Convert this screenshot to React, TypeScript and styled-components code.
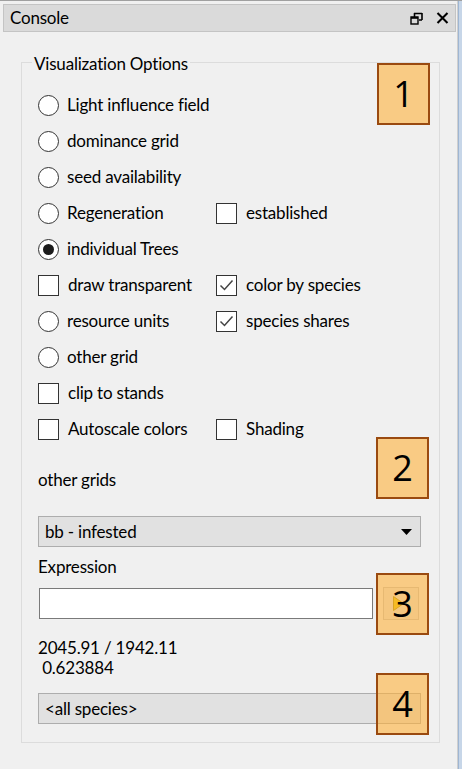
import React from "react";
import styled, { createGlobalStyle } from "styled-components";

const GlobalStyle = createGlobalStyle`
	html, body {
		margin: 0;
		padding: 0;
		background: #f0f0f0;
	}
	body {
		font-family: Lato, "Open Sans", sans-serif;
		font-size: 17px;
		letter-spacing: -0.2px;
		color: #000;
	}
`;

const Screen = styled.div`
	position: relative;
	width: 462px;
	height: 769px;
	display: flex;
	overflow: hidden;
	box-sizing: border-box;
	border-top: 1px solid #a0a0a0;
`;

const Dock = styled.div`
	width: 457px;
	display: flex;
	flex-direction: column;
`;

const EdgeLine = styled.div`
	width: 1px;
	background: #cfcfcf;
`;

const NeighborStrip = styled.div`
	flex: 1;
	background: #c7d6e8;
	border-left: 1px solid #9fb6d3;
`;

const TitleBar = styled.div`
	margin: 3px 1px 0 3px;
	height: 28px;
	box-sizing: border-box;
	background: #dadada;
	border: 1px solid #c4c4c4;
	display: flex;
	align-items: center;
	padding: 0 6px;
`;

const TitleText = styled.span`
	flex: 1;
	line-height: 22px;
`;

const TitleButtons = styled.div`
	display: flex;
	align-items: center;
	gap: 13px;
`;

const GroupBox = styled.fieldset`
	margin: 17px 0 0 21px;
	width: 419px;
	box-sizing: border-box;
	min-width: 0;
	border: 1px solid #dcdcdc;
	padding: 0 17px 18px 16px;
`;

const Legend = styled.legend`
	margin-left: -6px;
	padding: 4px 2px 0;
	line-height: 22px;
`;

const OptionGrid = styled.div`
	margin-top: 12px;
	display: grid;
	grid-template-columns: 178px 1fr;
	grid-auto-rows: 36px;
`;

const Option = styled.label<{ $col?: number }>`
	display: flex;
	align-items: center;
	gap: 8px;
	grid-column: ${(p) => p.$col ?? 1};
	line-height: 22px;
	white-space: nowrap;
`;

const Spacer = styled.div`
	grid-column: 2;
`;

const RadioMark = styled.span<{ $checked?: boolean }>`
	position: relative;
	width: 19px;
	height: 19px;
	border-radius: 50%;
	border: 1px solid #333;
	background: #fff;
	flex: none;
	&::after {
		content: "";
		display: ${(p) => (p.$checked ? "block" : "none")};
		position: absolute;
		left: 4px;
		top: 4px;
		width: 11px;
		height: 11px;
		border-radius: 50%;
		background: #1c1c1c;
	}
`;

const CheckMark = styled.span`
	width: 19px;
	height: 19px;
	border: 1px solid #333;
	background: #fff;
	flex: none;
	display: flex;
	align-items: center;
	justify-content: center;
	margin-right: 1px;
`;

const SectionLabel = styled.div<{ $top: number }>`
	margin-top: ${(p) => p.$top}px;
	line-height: 22px;
`;

const Combo = styled.div<{ $top: number }>`
	margin-top: ${(p) => p.$top}px;
	width: 383px;
	height: 31px;
	box-sizing: border-box;
	background: #e1e1e1;
	border: 1px solid #adadad;
	display: flex;
	align-items: center;
	padding: 0 8px 0 6px;
`;

const ComboText = styled.span`
	flex: 1;
	line-height: 22px;
`;

const ExpressionRow = styled.div`
	margin-top: 9px;
	display: flex;
	align-items: center;
	height: 33px;
`;

const TextInput = styled.div`
	margin-left: 1px;
	width: 334px;
	height: 31px;
	box-sizing: border-box;
	background: #fff;
	border: 1px solid #7a7a7a;
`;

const RunButton = styled.div`
	margin-left: 10px;
	width: 36px;
	height: 33px;
	box-sizing: border-box;
	background: #e6e6e6;
	border: 1px solid #c4c4c4;
	display: flex;
	align-items: center;
	padding-left: 9px;
`;

const Readout = styled.div`
	margin-top: 18px;
	line-height: 20px;
	white-space: pre;
`;

const Callout = styled.div<{ $x: number; $y: number }>`
	position: absolute;
	left: ${(p) => p.$x}px;
	top: ${(p) => p.$y}px;
	width: 53px;
	height: 62px;
	box-sizing: border-box;
	border: 2px solid #9a4a10;
	background: rgba(255, 178, 60, 0.6);
	display: flex;
	align-items: center;
	justify-content: center;
	font-family: "Open Sans", sans-serif;
	font-size: 36px;
	letter-spacing: 0;
	line-height: 1;
	color: #000;
`;

const FloatIcon = () => (
	<svg width="13" height="13" viewBox="0 0 13 13">
		<path d="M4 1.5h8M4.5 1v5M12 1v7M9 8h3" stroke="#000" strokeWidth="1.6" fill="none" />
		<rect x="1" y="5" width="7" height="7" fill="none" stroke="#000" strokeWidth="1.4" />
		<path d="M1 5.8h7" stroke="#000" strokeWidth="2" />
	</svg>
);

const CloseIcon = () => (
	<svg width="13" height="12" viewBox="0 0 13 12">
		<path d="M1.5 1L11.5 11M11.5 1L1.5 11" stroke="#000" strokeWidth="2.1" />
	</svg>
);

const Tick = () => (
	<svg width="15" height="13" viewBox="0 0 15 13">
		<path d="M1.5 6.5L5.5 10.5L13.5 1.5" stroke="#444" strokeWidth="1.5" fill="none" />
	</svg>
);

const Arrow = () => (
	<svg width="11" height="6" viewBox="0 0 11 6">
		<path d="M0 0H11L5.5 6Z" fill="#000" />
	</svg>
);

const PlayIcon = () => (
	<svg width="11" height="15" viewBox="0 0 11 15">
		<path d="M0.5 0.5L10.5 7.5L0.5 14.5Z" fill="#e8c800" stroke="#a89000" strokeWidth="1" />
	</svg>
);

const Radio: React.FC<{ label: string; checked?: boolean }> = ({ label, checked }) => (
	<Option>
		<RadioMark $checked={checked} />
		{label}
	</Option>
);

const Check: React.FC<{ label: string; checked?: boolean; col?: number }> = ({ label, checked, col }) => (
	<Option $col={col}>
		<CheckMark>{checked && <Tick />}</CheckMark>
		{label}
	</Option>
);

export default function App() {
	return (
		<>
			<GlobalStyle />
			<Screen>
				<Dock>
					<TitleBar>
						<TitleText>Console</TitleText>
						<TitleButtons>
							<FloatIcon />
							<CloseIcon />
						</TitleButtons>
					</TitleBar>
					<GroupBox>
						<Legend>Visualization Options</Legend>
						<OptionGrid>
							<Radio label="Light influence field" />
							<Spacer />
							<Radio label="dominance grid" />
							<Spacer />
							<Radio label="seed availability" />
							<Spacer />
							<Radio label="Regeneration" />
							<Check label="established" col={2} />
							<Radio label="individual Trees" checked />
							<Spacer />
							<Check label="draw transparent" />
							<Check label="color by species" checked col={2} />
							<Radio label="resource units" />
							<Check label="species shares" checked col={2} />
							<Radio label="other grid" />
							<Spacer />
							<Check label="clip to stands" />
							<Spacer />
							<Check label="Autoscale colors" />
							<Check label="Shading" col={2} />
						</OptionGrid>
						<SectionLabel $top={22}>other grids</SectionLabel>
						<Combo $top={25}>
							<ComboText>bb - infested</ComboText>
							<Arrow />
						</Combo>
						<SectionLabel $top={9}>Expression</SectionLabel>
						<ExpressionRow>
							<TextInput />
							<RunButton>
								<PlayIcon />
							</RunButton>
						</ExpressionRow>
						<Readout>{"2045.91 / 1942.11\n 0.623884"}</Readout>
						<Combo $top={15}>
							<ComboText>&lt;all species&gt;</ComboText>
						</Combo>
					</GroupBox>
				</Dock>
				<EdgeLine />
				<NeighborStrip />
				<Callout $x={377} $y={62}>1</Callout>
				<Callout $x={376} $y={436}>2</Callout>
				<Callout $x={376} $y={572}>3</Callout>
				<Callout $x={376} $y={672}>4</Callout>
			</Screen>
		</>
	);
}
